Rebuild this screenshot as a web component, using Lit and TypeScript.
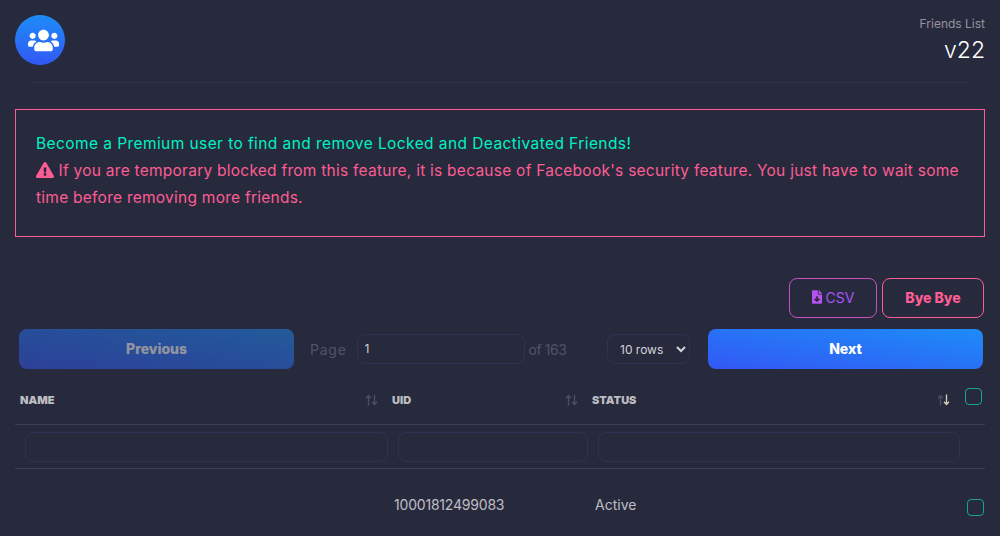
import { LitElement, html, css, svg } from "lit";
import { customElement } from "lit/decorators.js";

const usersIcon = svg`<path fill="currentColor" d="M96 224c35.3 0 64-28.7 64-64s-28.7-64-64-64-64 28.7-64 64 28.7 64 64 64zm448 0c35.3 0 64-28.7 64-64s-28.7-64-64-64-64 28.7-64 64 28.7 64 64 64zm32 32h-64c-17.6 0-33.5 7.1-45.1 18.6 40.3 22.1 68.9 62 75.1 109.4h66c17.7 0 32-14.3 32-32v-32c0-35.3-28.7-64-64-64zm-256 0c61.9 0 112-50.1 112-112S381.9 32 320 32 208 82.1 208 144s50.1 112 112 112zm76.8 32h-8.3c-20.8 10-43.9 16-68.5 16s-47.6-6-68.5-16h-8.3C179.6 288 128 339.6 128 403.2V432c0 26.5 21.5 48 48 48h288c26.5 0 48-21.5 48-48v-28.8c0-63.6-51.6-115.2-115.2-115.2zm-223.7-13.4C161.5 263.1 145.6 256 128 256H64c-35.3 0-64 28.7-64 64v32c0 17.7 14.3 32 32 32h65.9c6.3-47.4 34.9-87.3 75.2-109.4z"/>`;
const warnIcon = svg`<path fill="currentColor" d="M569.517 440.013C587.975 472.007 564.806 512 527.94 512H48.054c-36.937 0-59.999-40.055-41.577-71.987L246.423 23.985c18.467-32.009 64.72-31.951 83.154 0l239.94 416.028zM288 354c-25.405 0-46 20.595-46 46s20.595 46 46 46 46-20.595 46-46-20.595-46-46-46zm-43.673-165.346l7.418 136c.347 6.364 5.609 11.346 11.982 11.346h48.546c6.373 0 11.635-4.982 11.982-11.346l7.418-136c.375-6.874-5.098-12.654-11.982-12.654h-63.383c-6.884 0-12.356 5.78-11.981 12.654z"/>`;
const fileIcon = svg`<path fill="currentColor" d="M224 136V0H24C10.7 0 0 10.7 0 24v464c0 13.3 10.7 24 24 24h336c13.3 0 24-10.7 24-24V160H248c-13.2 0-24-10.8-24-24zm76.45 211.36l-96.42 95.7c-6.65 6.61-17.39 6.61-24.04 0l-96.42-95.7C73.42 337.29 80.54 320 94.82 320H160v-80c0-8.84 7.16-16 16-16h32c8.84 0 16 7.16 16 16v80h65.18c14.28 0 21.4 17.29 11.27 27.36zM377 105L279.1 7c-4.5-4.5-10.6-7-17-7H256v128h128v-6.1c0-6.3-2.5-12.4-7-16.9z"/>`;

function sortIcon(active = false) {
  const down = active ? "#d9cfc0" : "#4d4f66";
  return html`<svg class="sort" viewBox="0 0 13 12" width="13" height="12">
    <path d="M3.5 11.5V2M1 4.2 3.5 1.5 6 4.2" fill="none" stroke="#4d4f66" stroke-width="1.3"/>
    <path d="M9.5 .5V10M7 7.8l2.5 2.7L12 7.8" fill="none" stroke=${down} stroke-width="1.3"/>
  </svg>`;
}

@customElement("app-root")
export class AppRoot extends LitElement {
  static styles = css`
    :host {
      display: block;
      min-height: 100vh;
      background: #27293d;
      font-family: "Inter", "Open Sans", sans-serif;
      color: rgba(255, 255, 255, 0.7);
      overflow: hidden;
    }
    * { box-sizing: border-box; }
    .main { padding: 15px 15px 0; }
    .header { display: flex; justify-content: space-between; height: 52px; }
    .logo {
      width: 50px; height: 50px; border-radius: 50%;
      background: linear-gradient(0deg, #3358f4, #1d8cf8);
      display: flex; align-items: center; justify-content: center; color: #fff;
      padding-left: 7px;
    }
    .logo svg { width: 31px; height: 25px; }
    .brand { text-align: right; margin-top: 2px; }
    .brand-title { font-size: 12px; line-height: 14px; color: rgba(255, 255, 255, 0.5); }
    .brand-version { font-size: 23px; line-height: 28px; color: #fff; font-weight: 300; margin-top: 5px; }
    .divider { height: 1px; background: #2b3553; margin: 15px 15px 0; }
    .alert {
      margin-top: 26px; height: 128px; border: 1px solid #fd5d93;
      padding: 20px 20px; font-size: 15.5px; line-height: 27px;
      color: #fd5d93;
    }
    .alert-ok { color: #00f2c3; letter-spacing: 0.42px; }
    .alert-warn { letter-spacing: 0.25px; }
    .warn { width: 18px; height: 16px; vertical-align: -2px; }
    .actions { display: flex; justify-content: flex-end; gap: 5px; margin-top: 41px; padding-right: 1px; }
    .outline {
      height: 40px; background: transparent; border-radius: 8px; font-family: inherit;
      display: flex; align-items: center; justify-content: center; gap: 4px; padding: 0 0 2px;
    }
    .csv { width: 88px; border: 1px solid #c94fbf; color: #a855f7; font-size: 14px; }
    .csv svg { width: 10px; height: 14px; color: #b452f0; }
    .bye { width: 102px; border: 1px solid #fd5d93; color: #fd5d93; font-size: 14px; font-weight: 800; }
    .pager {
      display: grid; grid-template-columns: 275px 1fr 275px;
      margin-top: 11px; padding: 0 2px 0 4px;
    }
    .nav {
      height: 40px; border: 0; border-radius: 8px; font-family: inherit; padding: 0 0 2px;
      font-size: 14px; font-weight: 800; color: #fff;
      background: linear-gradient(to top right, #3358f4, #1d8cf8);
    }
    .nav.disabled { opacity: 0.5; }
    .mid { display: flex; align-items: center; padding-left: 16px; padding-right: 18px; color: #50536b; font-size: 14px; }
    .page-label { letter-spacing: 0.75px; }
    .of-label { letter-spacing: -0.45px; }
    .field {
      background: transparent; border: 1px solid #2b3553; border-radius: 8px;
      font-family: inherit; color: rgba(255, 255, 255, 0.8); outline: none;
    }
    .page-input { width: 168px; height: 30px; margin-left: 10px; margin-right: 4px; padding: 0 7px 2px; font-size: 12px; }
    .rows { width: 83px; height: 30px; margin-left: auto; padding: 0 0 0 8px; font-size: 12px; }
    .row {
      display: grid; grid-template-columns: 373px 200px 372px 25px;
      border-bottom: 1px solid rgba(255, 255, 255, 0.1);
    }
    .head { height: 56px; align-items: center; font-size: 11px; font-weight: 900; }
    .th { display: flex; justify-content: space-between; align-items: center; padding: 7px 10px 0 5px; }
    .th-uid { padding-left: 4px; }
    .th-status { padding-left: 4px; }
    .filters { height: 44px; align-items: center; }
    .filters .field { height: 30px; margin-left: 10px; display: block; width: calc(100% - 10px); }
    .data { height: 70px; align-items: center; border-bottom: 0; font-size: 14px; }
    .cell-uid { padding-left: 6px; letter-spacing: -0.2px; }
    .cell-status { padding-left: 7px; }
    .check {
      appearance: none; margin: 0; width: 17px; height: 17px; display: block;
      border: 1px solid #17a68d; border-radius: 4px; background: transparent;
    }
    .head .check { margin: 0 0 1px 5px; }
    .data .check { margin: 6px 0 0 7px; }
  `;

  render() {
    return html`
      <div class="main">
        <div class="header">
          <div class="logo"><svg viewBox="0 0 640 512">${usersIcon}</svg></div>
          <div class="brand">
            <div class="brand-title">Friends List</div>
            <div class="brand-version">v22</div>
          </div>
        </div>
        <div class="divider"></div>
        <div class="alert">
          <div class="alert-ok">Become a Premium user to find and remove Locked and Deactivated Friends!</div>
          <div class="alert-warn"><svg class="warn" viewBox="0 0 576 512">${warnIcon}</svg> If you are temporary blocked from this feature, it is because of Facebook's security feature. You just have to wait some time before removing more friends.</div>
        </div>
        <div class="actions">
          <button class="outline csv"><svg viewBox="0 0 384 512">${fileIcon}</svg>CSV</button>
          <button class="outline bye">Bye Bye</button>
        </div>
        <div class="pager">
          <button class="nav disabled">Previous</button>
          <div class="mid">
            <span class="page-label">Page</span>
            <input class="field page-input" .value=${"1"} />
            <span class="of-label">of 163</span>
            <select class="field rows"><option>10 rows</option></select>
          </div>
          <button class="nav">Next</button>
        </div>
        <div class="row head">
          <div class="th"><span>NAME</span>${sortIcon()}</div>
          <div class="th th-uid"><span>UID</span>${sortIcon()}</div>
          <div class="th th-status"><span>STATUS</span>${sortIcon(true)}</div>
          <input class="check" type="checkbox" />
        </div>
        <div class="row filters">
          <input class="field" />
          <input class="field" />
          <input class="field" />
          <div></div>
        </div>
        <div class="row data">
          <div></div>
          <div class="cell-uid">10001812499083</div>
          <div class="cell-status">Active</div>
          <input class="check" type="checkbox" />
        </div>
      </div>
    `;
  }
}
